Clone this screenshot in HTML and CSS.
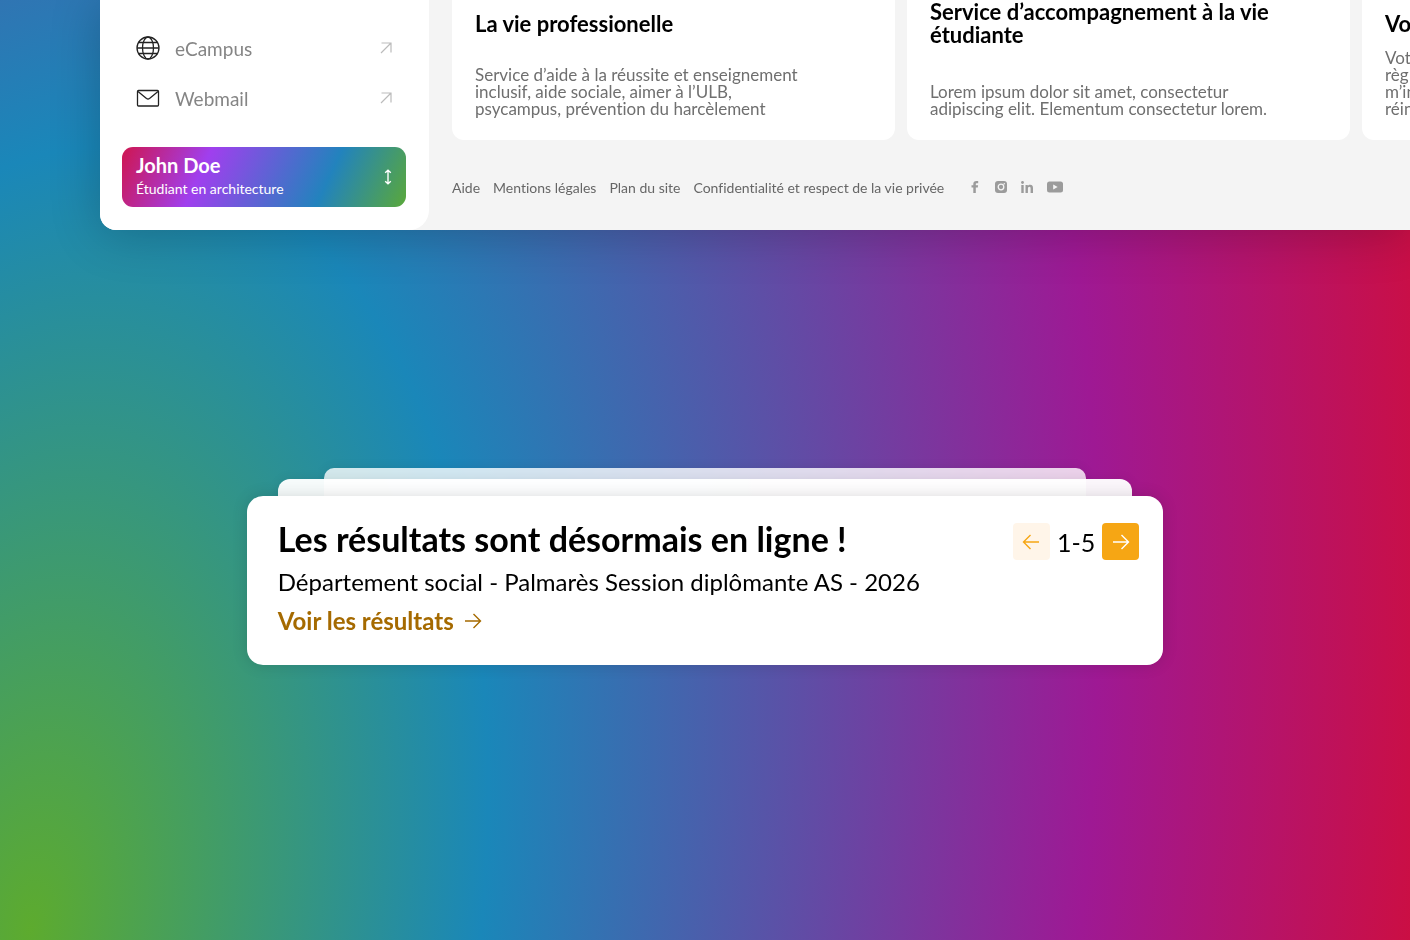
FILE: index.html
```
<!DOCTYPE html>
<html lang="fr">
<head>
    <meta charset="UTF-8">
    <meta name="viewport" content="width=device-width, initial-scale=1.0">
    <title>Portail étudiant</title>
    <link rel="stylesheet" href="styles.css">
</head>
<body>
    <svg class="backdrop" viewBox="0 0 1410 940" preserveAspectRatio="none" aria-hidden="true">
        <defs>
            <radialGradient id="rainbow" gradientUnits="userSpaceOnUse" cx="0" cy="0" r="3.1" gradientTransform="translate(30 930) rotate(8.7) scale(447 789)">
                <stop offset="0" stop-color="#5dab2e"/>
                <stop offset="0.323" stop-color="#1a87b9"/>
                <stop offset="0.752" stop-color="#9e1994"/>
                <stop offset="1" stop-color="#cd0e40"/>
            </radialGradient>
        </defs>
        <rect width="1410" height="940" fill="url(#rainbow)"/>
    </svg>

    <div class="portal">
        <aside class="sidebar">
            <nav class="menu">
                <a href="#" class="menu-link">
                    <svg class="menu-icon" viewBox="0 0 24 24">
                        <circle cx="12" cy="12" r="11"/>
                        <ellipse cx="12" cy="12" rx="5.5" ry="11"/>
                        <path d="M1 12h22M2.5 6.5h19M2.5 17.5h19"/>
                    </svg>
                    <span>eCampus</span>
                    <svg class="menu-arrow" viewBox="0 0 12 12"><path d="M1 11L11 1M1.5 1H11v9.5"/></svg>
                </a>
                <a href="#" class="menu-link">
                    <svg class="menu-icon" viewBox="0 0 24 24">
                        <rect x="1.5" y="4.5" width="21" height="15.500" rx="1"/>
                        <path d="M2 5.500l8.500 7q1.500 1 3 0L22 5.500"/>
                    </svg>
                    <span>Webmail</span>
                    <svg class="menu-arrow" viewBox="0 0 12 12"><path d="M1 11L11 1M1.5 1H11v9.5"/></svg>
                </a>
            </nav>
            <button type="button" class="user">
                <span class="user-text">
                    <strong>John Doe</strong>
                    <small>Étudiant en architecture</small>
                </span>
                <svg class="user-arrows" viewBox="0 0 8 16"><path d="M4 1.500v13M1.200 3.800L4 1.200l2.800 2.600M1.200 12.200L4 14.800l2.800-2.600"/></svg>
            </button>
        </aside>

        <main class="content">
            <div class="cards">
                <article class="card">
                    <h2>La vie professionelle</h2>
                    <p>Service d’aide à la réussite et enseignement<br>inclusif, aide sociale, aimer à l’ULB,<br>psycampus, prévention du harcèlement</p>
                </article>
                <article class="card">
                    <h2>Service d’accompagnement à la vie<br>étudiante</h2>
                    <p>Lorem ipsum dolor sit amet, consectetur<br>adipiscing elit. Elementum consectetur lorem.</p>
                </article>
                <article class="card">
                    <h2>Vo</h2>
                    <p>Vot<br>règl<br>m’in<br>réin</p>
                </article>
            </div>
            <footer class="footer">
                <a href="#">Aide</a>
                <a href="#">Mentions légales</a>
                <a href="#">Plan du site</a>
                <a href="#">Confidentialité et respect de la vie privée</a>
                <div class="social">
                    <a href="#" aria-label="Facebook"><svg width="12" height="12" viewBox="-2 0 12 12"><path d="M2.300 12V6.600H.5V4.300h1.800V3c0-2 1.100-3 3-3h1.900v2.200H5.900c-.8 0-1.100.3-1.100 1v1.100h2.300l-.3 2.300h-2V12z"/></svg></a>
                    <a href="#" aria-label="Instagram"><svg width="12" height="12" viewBox="0 0 12 12"><rect width="12" height="12" rx="3"/><circle cx="6" cy="6" r="2.800" fill="none" stroke="#f4f4f4" stroke-width="1.300"/><circle cx="9.300" cy="2.700" r=".8" fill="#f4f4f4"/></svg></a>
                    <a href="#" aria-label="LinkedIn"><svg width="12" height="12" viewBox="0 0 12 12"><circle cx="1.500" cy="1.500" r="1.400"/><path d="M.3 4h2.400v8H.3zM4.500 4h2.300v1.100C7.300 4.300 8 3.800 9.200 3.800 11.400 3.800 12 5.200 12 7.200V12H9.600V7.700c0-1.100-.2-1.900-1.200-1.900S6.900 6.600 6.900 7.700V12H4.500z"/></svg></a>
                    <a href="#" aria-label="YouTube"><svg width="16" height="12" viewBox="0 0 16 12"><rect y=".5" width="16" height="11" rx="2.500"/><path d="M6.200 3.500v5L10.700 6z" fill="#f4f4f4"/></svg></a>
                </div>
            </footer>
        </main>
    </div>

    <section class="notice-stack">
        <div class="notice-layer notice-layer-back"></div>
        <div class="notice-layer notice-layer-middle"></div>
        <div class="notice">
            <div class="notice-text">
                <h1>Les résultats sont désormais en ligne !</h1>
                <p>Département social - Palmarès Session diplômante AS - 2026</p>
                <a href="#">Voir les résultats
                    <svg class="arrow" viewBox="0 0 18 18"><path d="M1 9h15.500M9.500 2l7 7-7 7"/></svg>
                </a>
            </div>
            <div class="pager">
                <button type="button" class="prev" aria-label="Précédent"><svg class="arrow" viewBox="0 0 18 18"><path d="M17 9H1.500M8.500 2l-7 7 7 7"/></svg></button>
                <span>1-5</span>
                <button type="button" class="next" aria-label="Suivant"><svg class="arrow" viewBox="0 0 18 18"><path d="M1 9h15.500M9.500 2l7 7-7 7"/></svg></button>
            </div>
        </div>
    </section>
</body>
</html>
```
FILE: styles.css
```
* {
    margin: 0;
    padding: 0;
    box-sizing: border-box;
}

body {
    min-height: 100vh;
    font-family: Lato, sans-serif;
    font-variant-ligatures: none;
    color: #000;
    overflow-x: hidden;
}

a {
    color: inherit;
    text-decoration: none;
}

button {
    border: none;
    font-family: inherit;
    cursor: pointer;
}

svg {
    display: block;
}

.backdrop {
    position: fixed;
    top: 0;
    left: 0;
    width: 100%;
    height: 100%;
    z-index: -1;
}

/* portal panel, runs off the top and right edges */
.portal {
    display: flex;
    margin-left: 100px;
    background: #f4f4f4;
    border-radius: 0 0 0 16px;
    overflow: hidden;
    box-shadow: 0 4px 50px rgba(0, 0, 0, 0.22);
}

.sidebar {
    flex: 0 0 329px;
    display: flex;
    flex-direction: column;
    justify-content: space-between;
    padding: 24px 23px 23px 22px;
    background: #fff;
    border-radius: 0 0 20px 0;
}

.menu {
    display: flex;
    flex-direction: column;
    gap: 2px;
    padding: 0 14px;
}

.menu-link {
    display: flex;
    align-items: center;
    gap: 15px;
    height: 48px;
    font-size: 19px;
    color: #858585;
}

.menu-link span {
    flex: 1;
}

.menu-icon {
    width: 24px;
    height: 24px;
    fill: none;
    stroke: #222;
    stroke-width: 1.3;
}

.menu-arrow {
    width: 12px;
    height: 12px;
    fill: none;
    stroke: #bbb;
    stroke-width: 1.2;
}

.user {
    display: flex;
    align-items: center;
    justify-content: space-between;
    height: 60px;
    padding: 0 14px;
    border-radius: 11px;
    background: linear-gradient(115deg, #cf1650 0%, #a03fee 29%, #2283bd 71%, #5aa83a 100%);
    color: #fff;
    text-align: left;
}

.user-text strong,
.user-text small {
    display: block;
}

.user-text strong {
    font-size: 20px;
    line-height: 24px;
}

.user-text small {
    font-size: 14px;
    line-height: 24px;
}

.user-arrows {
    width: 8px;
    height: 16px;
    fill: none;
    stroke: #fff;
    stroke-width: 1.4;
}

.content {
    flex: 1;
    min-width: 0;
    padding-left: 23px;
}

.cards {
    display: flex;
    gap: 12px;
}

.card {
    flex: 0 0 443px;
    display: flex;
    flex-direction: column;
    justify-content: space-between;
    gap: 3px;
    padding: 0 23px 23px;
    background: #fff;
    border-radius: 0 0 12px 12px;
}

.card h2 {
    display: flex;
    align-items: center;
    min-height: 46px;
    font-size: 22px;
    line-height: 23px;
}

.card p {
    font-size: 17px;
    line-height: 17px;
    color: #6f6f6f;
}

.footer {
    display: flex;
    align-items: center;
    gap: 13px;
    height: 90px;
    padding-top: 4px;
    font-size: 14px;
    color: #666;
}

.social {
    display: flex;
    align-items: center;
    gap: 14px;
    margin-left: 12px;
    fill: #9b9b9b;
}

.notice-stack {
    position: relative;
    width: 65%;
    margin: 266px auto 0;
}

.notice-layer {
    position: absolute;
    height: 60px;
    box-shadow: 0 0 12px rgba(0, 0, 0, 0.08);
}

.notice-layer-back {
    top: -28px;
    left: 77px;
    right: 77px;
    border-radius: 10px;
    background: rgba(255, 255, 255, 0.8);
}

.notice-layer-middle {
    top: -17px;
    left: 31px;
    right: 31px;
    border-radius: 12px;
    background: rgba(255, 255, 255, 0.96);
}

.notice {
    position: relative;
    display: flex;
    justify-content: space-between;
    align-items: flex-start;
    padding: 24px 24px 28px 31px;
    background: #fff;
    border-radius: 16px;
    box-shadow: 0 0 16px rgba(0, 0, 0, 0.14);
}

.notice h1 {
    font-size: 34px;
    line-height: 38px;
}

.notice p {
    font-size: 24px;
    line-height: 42px;
    margin: 3px 0 1px;
}

.notice a {
    display: inline-flex;
    align-items: center;
    gap: 10px;
    font-size: 24px;
    line-height: 33px;
    font-weight: bold;
    color: #a56a00;
}

.arrow {
    width: 18px;
    height: 18px;
    fill: none;
    stroke: currentColor;
    stroke-width: 1.4;
}

.pager {
    display: flex;
    align-items: center;
    gap: 7px;
    margin-top: 3px;
    font-size: 25px;
}

.pager button {
    display: flex;
    align-items: center;
    justify-content: center;
    width: 37px;
    height: 37px;
    border-radius: 4px;
}

.prev {
    background: #fff5e9;
    color: #f6a614;
}

.next {
    background: #f6a614;
    color: #fff;
}
```
